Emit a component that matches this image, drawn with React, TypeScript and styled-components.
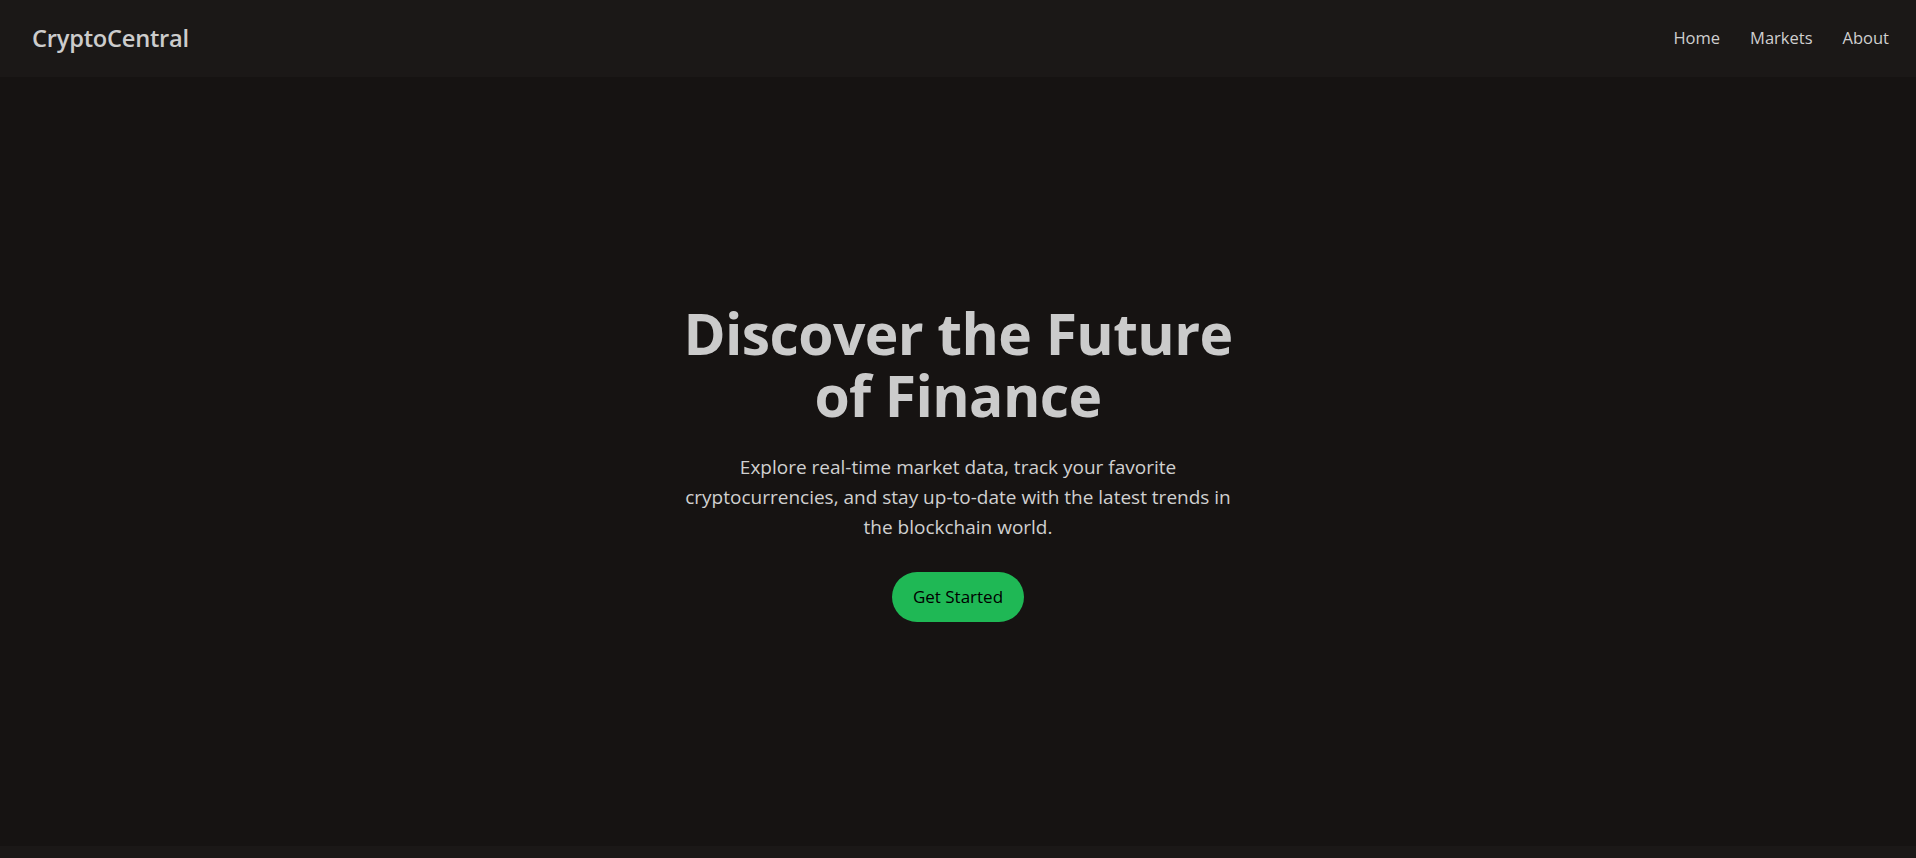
import React from "react";
import styled, { createGlobalStyle } from "styled-components";

const GlobalStyle = createGlobalStyle`
  html, body {
    margin: 0;
    padding: 0;
    background: #161312;
  }
  body {
    font-family: "Open Sans", "Noto Sans", "Liberation Sans", sans-serif;
    color: #cccccc;
    -webkit-font-smoothing: antialiased;
  }
  * { box-sizing: border-box; }
`;

const Page = styled.div`
  min-height: 100vh;
  display: flex;
  flex-direction: column;
`;

const Header = styled.header`
  height: 77px;
  padding: 0 27px 2px 32px;
  display: flex;
  align-items: center;
  justify-content: space-between;
  background: #1b1817;
`;

const Logo = styled.div`
  font-size: 23.7px;
  font-weight: 600;
  color: #cccccc;
  letter-spacing: -0.25px;
`;

const Nav = styled.nav`
  display: flex;
  align-items: center;
  gap: 30px;
`;

const NavLink = styled.a`
  font-size: 16.5px;
  color: #cfcfcf;
  text-decoration: none;
  cursor: pointer;
`;

const Main = styled.main`
  flex: 1;
  display: flex;
  align-items: center;
  justify-content: center;
  background: #161312;
`;

const Hero = styled.section`
  max-width: 560px;
  display: flex;
  flex-direction: column;
  align-items: center;
  text-align: center;
`;

const Title = styled.h1`
  margin: 0;
  font-size: 57px;
  line-height: 62px;
  font-weight: 700;
  color: #cbcbcb;
  letter-spacing: -0.6px;
`;

const Lead = styled.p`
  margin: 26px 0 0;
  font-size: 19px;
  line-height: 30px;
  color: #d0d0d0;
`;

const CTA = styled.button`
  margin-top: 30px;
  height: 50px;
  padding: 0 21px;
  border: none;
  border-radius: 25px;
  background: #1fb855;
  color: #000000;
  font-family: inherit;
  font-size: 17px;
  font-weight: 500;
  cursor: pointer;
`;

const Footer = styled.footer`
  height: 12px;
  background: #1b1817;
`;

export default function App() {
  return (
    <>
      <GlobalStyle />
      <Page>
        <Header>
          <Logo>CryptoCentral</Logo>
          <Nav>
            <NavLink>Home</NavLink>
            <NavLink>Markets</NavLink>
            <NavLink>About</NavLink>
          </Nav>
        </Header>
        <Main>
          <Hero>
            <Title>Discover the Future of Finance</Title>
            <Lead>
              Explore real-time market data, track your favorite
              cryptocurrencies, and stay up-to-date with the latest trends in
              the blockchain world.
            </Lead>
            <CTA>Get Started</CTA>
          </Hero>
        </Main>
        <Footer />
      </Page>
    </>
  );
}
